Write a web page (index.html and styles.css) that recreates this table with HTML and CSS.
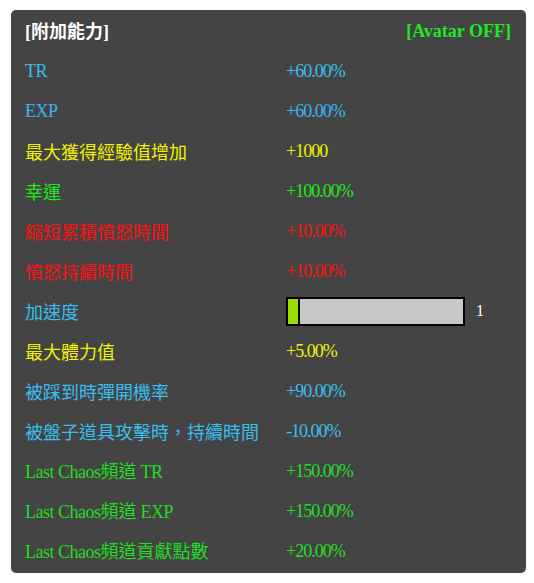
FILE: index.html
```html
<!DOCTYPE html>
<html>
<head>
<meta charset="utf-8">
<link rel="stylesheet" href="styles.css">
</head>
<body>
<div class="panel">
  <div class="row head">
    <span class="title"><span class="lat">[</span><span class="cjk">附加能力</span><span class="lat">]</span></span>
    <span class="avatar">[Avatar OFF]</span>
  </div>
  <div class="row blue"><span>TR</span><span class="num">+60.00%</span></div>
  <div class="row blue2"><span>EXP</span><span class="num">+60.00%</span></div>
  <div class="row yellow"><span class="cjk">最大獲得經驗值增加</span><span class="num">+1000</span></div>
  <div class="row green"><span class="cjk">幸運</span><span class="num">+100.00%</span></div>
  <div class="row red"><span class="cjk">縮短累積憤怒時間</span><span class="num">+10.00%</span></div>
  <div class="row red"><span class="cjk">憤怒持續時間</span><span class="num">+10.00%</span></div>
  <div class="row blue"><span class="cjk">加速度</span>
    <span class="barwrap"><span class="bar"><span class="fill"></span></span><span class="barnum">1</span></span>
  </div>
  <div class="row yellow"><span class="cjk">最大體力值</span><span class="num">+5.00%</span></div>
  <div class="row blue"><span class="cjk">被踩到時彈開機率</span><span class="num">+90.00%</span></div>
  <div class="row blue"><span class="cjk">被盤子道具攻擊時，持續時間</span><span class="num">-10.00%</span></div>
  <div class="row lgreen"><span>Last Chaos<span class="cjk">頻道</span> TR</span><span class="num">+150.00%</span></div>
  <div class="row lgreen"><span>Last Chaos<span class="cjk">頻道</span> EXP</span><span class="num">+150.00%</span></div>
  <div class="row lgreen"><span>Last Chaos<span class="cjk">頻道貢獻點數</span></span><span class="num">+20.00%</span></div>
</div>
</body>
</html>
```

FILE: styles.css
```css
html, body {
  margin: 0;
  padding: 0;
  background: #ffffff;
}
body {
  padding: 10px 0 0 11px;
}
.panel {
  width: 515px;
  height: 563px;
  box-sizing: border-box;
  background: #444444;
  border-radius: 5px;
  padding: 1px 15px 2px 14px;
  font-family: "Liberation Serif", "Noto Sans CJK TC", serif;
  font-size: 18px;
  letter-spacing: -0.5px;
}
.cjk {
  font-family: "Noto Sans CJK TC", "Liberation Serif", sans-serif;
  font-size: 18px;
  font-weight: 400;
  letter-spacing: 0;
}
.num {
  letter-spacing: -1px;
}
.row {
  height: 40px;
  display: grid;
  grid-template-columns: 261px 1fr;
  align-items: center;
  line-height: 20px;
  white-space: nowrap;
}
.head {
  display: flex;
  justify-content: space-between;
  font-weight: 700;
  letter-spacing: 0;
}
.head .cjk {
  font-weight: 700;
}
.title {
  color: #ffffff;
}
.avatar {
  color: #1ee81e;
}
.blue { color: #38bff0; }
.blue2 { color: #3ab2f2; }
.yellow { color: #f2f200; }
.green { color: #1ee81e; }
.lgreen { color: #22dc22; }
.red { color: #ff1010; }
.barwrap {
  display: flex;
  align-items: center;
  gap: 11px;
}
.bar {
  display: flex;
  width: 179px;
  height: 29px;
  box-sizing: border-box;
  border: 2px solid #000000;
  background: #c8c8c8;
}
.fill {
  width: 10px;
  height: 100%;
  background: #98dc00;
  border-right: 2px solid #000000;
}
.barnum {
  color: #ffffff;
  font-size: 16px;
  letter-spacing: 0;
}
```
